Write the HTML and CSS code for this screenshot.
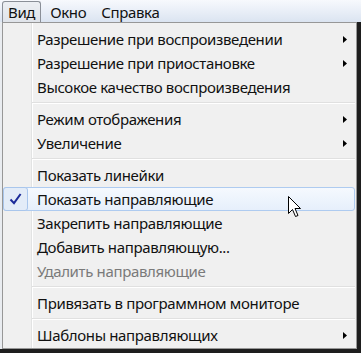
FILE: index.html
```html
<!DOCTYPE html>
<html lang="ru">
<head>
<meta charset="utf-8">
<link rel="stylesheet" href="styles.css">
</head>
<body>
<div class="menubar">
  <span class="mb-item active">Вид</span>
  <span class="mb-item">Окно</span>
  <span class="mb-item">Справка</span>
</div>
<div class="main">
  <div class="strip"></div>
  <div class="menu">
    <div class="item"><span class="gutter"></span><span class="label">Разрешение при воспроизведении</span><svg class="arrow" width="4" height="7" viewBox="0 0 4 7"><path d="M0 0L4 3.5L0 7Z"/></svg></div>
    <div class="item"><span class="gutter"></span><span class="label">Разрешение при приостановке</span><svg class="arrow" width="4" height="7" viewBox="0 0 4 7"><path d="M0 0L4 3.5L0 7Z"/></svg></div>
    <div class="item"><span class="gutter"></span><span class="label">Высокое качество воспроизведения</span></div>
    <div class="sep"></div>
    <div class="item"><span class="gutter"></span><span class="label">Режим отображения</span><svg class="arrow" width="4" height="7" viewBox="0 0 4 7"><path d="M0 0L4 3.5L0 7Z"/></svg></div>
    <div class="item"><span class="gutter"></span><span class="label">Увеличение</span><svg class="arrow" width="4" height="7" viewBox="0 0 4 7"><path d="M0 0L4 3.5L0 7Z"/></svg></div>
    <div class="sep"></div>
    <div class="item"><span class="gutter"></span><span class="label">Показать линейки</span></div>
    <div class="item hover"><span class="gutter"><span class="check"><svg width="13" height="12" viewBox="0 0 13 12"><path d="M1.5 6.5L5 10.2L11.6 1" fill="none" stroke="#1c2b99" stroke-width="2"/></svg></span></span><span class="label">Показать направляющие</span>
      <svg class="cursor" width="14" height="22" viewBox="0 0 14 22"><path d="M0.5 0.5L0.5 17.5L4.5 13.5L7.5 20.5L10 19.5L7 12.5L12.5 12.5Z" fill="#fff" stroke="#000" stroke-width="1" stroke-linejoin="miter"/></svg>
    </div>
    <div class="item"><span class="gutter"></span><span class="label">Закрепить направляющие</span></div>
    <div class="item"><span class="gutter"></span><span class="label">Добавить направляющую...</span></div>
    <div class="item disabled"><span class="gutter"></span><span class="label">Удалить направляющие</span></div>
    <div class="sep"></div>
    <div class="item"><span class="gutter"></span><span class="label">Привязать в программном мониторе</span></div>
    <div class="sep"></div>
    <div class="item"><span class="gutter"></span><span class="label">Шаблоны направляющих</span><svg class="arrow" width="4" height="7" viewBox="0 0 4 7"><path d="M0 0L4 3.5L0 7Z"/></svg></div>
  </div>
  <div class="filler"></div>
</div>
</body>
</html>
```
FILE: styles.css
```css
html, body {
  margin: 0;
  padding: 0;
}
body {
  width: 361px;
  height: 353px;
  overflow: hidden;
  background: #1e1e1e;
  font-family: "Noto Sans", "Open Sans", sans-serif;
  font-size: 15px;
  letter-spacing: -0.35px;
  color: #111;
}
.menubar {
  height: 22px;
  box-sizing: border-box;
  display: flex;
  align-items: stretch;
  gap: 3px;
  padding: 1px 0 0 2px;
  background: linear-gradient(#f7f9fd, #dbe4f1);
}
.mb-item {
  padding: 0 5px;
  line-height: 20px;
  border: 1px solid transparent;
  border-bottom: none;
}
.mb-item.active {
  border-color: #8a8f97;
  border-radius: 3px 3px 0 0;
  background: linear-gradient(#eceff3, #e0e4ea);
}
.main {
  display: flex;
  align-items: flex-start;
}
.strip {
  width: 2px;
  align-self: stretch;
  background: #e9ecf0;
}
.menu {
  width: 355px;
  box-sizing: border-box;
  border: 1px solid #979797;
  padding: 4px 1px 1px 0;
  background:
    linear-gradient(to right, transparent 28px, #e2e3e3 28px, #e2e3e3 29px, #ffffff 29px, #ffffff 30px, transparent 30px),
    #f0f0f0;
}
.filler {
  flex: 1;
}
.item {
  position: relative;
  display: flex;
  align-items: center;
  height: 24px;
  box-sizing: border-box;
  border: 1px solid transparent;
  border-radius: 3px;
}
.gutter {
  width: 29px;
  flex: none;
  align-self: stretch;
  display: flex;
}
.label {
  padding-left: 4px;
  white-space: nowrap;
}
.arrow {
  margin-left: auto;
  margin-right: 7px;
  fill: #000;
}
.item.hover {
  border-color: #aecbf0;
  background: linear-gradient(#f5f9fe, #e6effb);
}
.check {
  width: 25px;
  margin: -1px 0 -1px -1px;
  box-sizing: border-box;
  border: 1px solid #a9c6ec;
  border-radius: 3px;
  background: #e3ecf8;
  display: flex;
  align-items: center;
  justify-content: center;
}
.item.disabled {
  color: #7a7a7a;
}
.sep {
  height: 8px;
  margin-left: 29px;
  background: linear-gradient(transparent 3px, #e0e0e0 3px, #e0e0e0 4px, #ffffff 4px, #ffffff 5px, transparent 5px);
}
.cursor {
  position: absolute;
  left: 284px;
  top: 8px;
}
```
